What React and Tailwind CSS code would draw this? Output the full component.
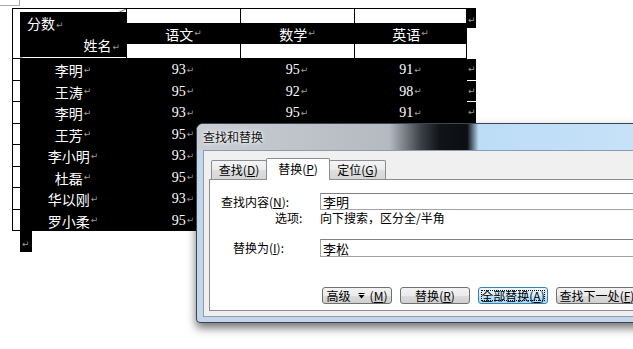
import React from "react";

function Pil({ className = "" }) {
  return (
    <span className={"font-['DejaVu_Sans',sans-serif] text-[9px] leading-none text-[#9a9a9a] ml-px " + className}>↵</span>
  );
}

function M({ k }) {
  return (
    <span>
      (<span className="underline">{k}</span>)
    </span>
  );
}

const rows = [
  ["李明", "93", "95", "91"],
  ["王涛", "95", "92", "98"],
  ["李明", "93", "95", "91"],
  ["王芳", "95", "", ""],
  ["李小明", "93", "", ""],
  ["杜磊", "95", "", ""],
  ["华以刚", "93", "", ""],
  ["罗小柔", "95", "", ""],
];

function Header() {
  return (
    <div className="flex">
      <div className="flex h-[51px] border border-black">
        <div className="w-[7px]" />
        <div className="relative w-[106px] pt-[3px] pb-[1px] flex">
          <svg className="absolute left-0 top-0" width="106" height="49">
            <line x1="106" y1="0" x2="0" y2="49" stroke="#7a7a7a" strokeWidth="1" />
          </svg>
          <div className="relative flex-1 bg-black text-white text-[14px] leading-none">
            <div className="pl-[7px] pt-[4px] flex items-end">
              分数<Pil />
            </div>
            <div className="pr-[6px] mt-[8px] flex justify-end items-end">
              姓名<Pil />
            </div>
          </div>
        </div>
        {["语文", "数学", "英语"].map((t, i) => (
          <div key={t} className={"border-l border-black flex flex-col " + (i === 2 ? "w-[112px]" : "w-[114px]")}>
            <div className="h-[14px]" />
            <div className="h-[21px] bg-black text-white flex items-center justify-center text-[14px] leading-none">
              {t}
              <Pil />
            </div>
          </div>
        ))}
      </div>
      <div className="w-[9px] h-[20px] bg-black flex items-end pb-[3px]">
        <Pil />
      </div>
    </div>
  );
}

function DataRow({ r, h, hidden }) {
  return (
    <div className={"flex " + h}>
      <div className="w-[8px] border-l border-b border-black" />
      <div className="w-[447px] bg-black flex text-white">
        <div className="w-[106px] flex items-center justify-center text-[14px] leading-none">
          {r[0]}
          <Pil />
        </div>
        {r.slice(1).map((n, i) => (
          <div
            key={i}
            className={"flex items-center justify-center font-['Liberation_Serif',serif] text-[14px] leading-none " + (i === 2 ? "w-[113px]" : "w-[114px]")}
          >
            {n}
            {n ? <Pil /> : null}
          </div>
        ))}
      </div>
      <div className="w-[9px] bg-black border-b border-white flex items-center">
        {hidden ? null : <Pil />}
      </div>
    </div>
  );
}

function Tab({ children, active, w }) {
  if (active) {
    return (
      <div className={"relative z-10 -ml-px h-[22px] -mb-px bg-white border border-b-0 border-[#898c95] rounded-t-[2px] flex items-center justify-center text-[12px] leading-none pb-[2px] " + w}>
        {children}
      </div>
    );
  }
  return (
    <div className={"h-[19px] border border-b-0 border-[#898c95] rounded-t-[2px] bg-[linear-gradient(#f4f4f4_0%,#ebebeb_50%,#dedede_50%,#d6d6d6_100%)] flex items-center justify-center text-[12px] leading-none " + w}>
      {children}
    </div>
  );
}

function Btn({ children, w = "w-[70px]", def }) {
  if (def) {
    return (
      <div className={"relative h-[17px] rounded-[3px] border border-[#3c7fb1] bg-[linear-gradient(#eaf6fd_0%,#d9f0fc_50%,#bee6fd_50%,#a7d9f5_100%)] flex items-center justify-center text-[12px] leading-none " + w}>
        <span className="absolute inset-[2px] border border-dotted border-black" />
        {children}
      </div>
    );
  }
  return (
    <div className={"h-[17px] rounded-[3px] border border-[#707070] bg-[linear-gradient(#f2f2f2_0%,#ebebeb_50%,#dddddd_50%,#cfcfcf_100%)] flex items-center justify-center text-[12px] leading-none whitespace-nowrap " + w}>
      {children}
    </div>
  );
}

function Dialog() {
  return (
    <div className="absolute left-[196px] top-[123px] w-[460px] h-[200px] rounded-t-[7px] rounded-b-[4px] border border-[#3a4452] bg-[#c3d6eb] shadow-[0_5px_10px_rgba(0,0,0,0.55)] flex flex-col overflow-hidden">
      <div className="h-[26px] shrink-0 bg-[linear-gradient(90deg,#c9ced4_0%,#b4bac1_42%,#3a3f46_49%,#101317_53%,#0c0f12_59%,#bcdcf7_61.5%,#c8e2f8_100%)] flex items-center pl-[6px] text-[12px] leading-none text-[#111] [text-shadow:0_0_5px_#fff,0_0_3px_#fff]">
        查找和替换
      </div>
      <div className="flex-1 pl-[6px] pb-[5px] flex">
        <div className="flex-1 border border-[#8e9cb0] bg-[#f0f0f0] pl-[5px] pt-[7px] pb-[5px] flex flex-col">
          <div className="flex items-end h-[21px] pl-[2px]">
            <Tab w="w-[56px]">
              查找<M k="D" />
            </Tab>
            <Tab active w="w-[64px]">
              替换<M k="P" />
            </Tab>
            <div className="-ml-px">
              <Tab w="w-[57px]">
                定位<M k="G" />
              </Tab>
            </div>
          </div>
          <div className="flex-1 bg-white border border-[#898c95] flex flex-col text-[12px] leading-none text-black">
            <div className="flex items-center mt-[13px] h-[17px]">
              <div className="w-[110px] pl-[11px]">
                查找内容<M k="N" />:
              </div>
              <div className="flex-1 h-[17px] border border-[#a0a4a9] border-t-[#7d8288] bg-white flex items-center pl-[2px] text-[13px]">
                李明
              </div>
            </div>
            <div className="flex items-center h-[16px]">
              <div className="w-[110px] pl-[65px]">选项:</div>
              <div>向下搜索，区分全/半角</div>
            </div>
            <div className="flex items-center mt-[13px] h-[18px]">
              <div className="w-[110px] pl-[23px]">
                替换为<M k="I" />:
              </div>
              <div className="flex-1 h-[18px] border border-[#a0a4a9] border-t-[#7d8288] bg-white flex items-center pl-[2px] text-[13px]">
                李松
              </div>
            </div>
            <div className="flex gap-[8px] mt-[30px] pl-[112px]">
              <Btn>
                高级
                <svg className="ml-[7px] mr-[5px]" width="7" height="7" viewBox="0 0 7 7">
                  <path d="M0.5 1.5h6" stroke="#000" strokeWidth="1" />
                  <path d="M0.5 3h6L3.5 6.5z" fill="#000" />
                </svg>
                <M k="M" />
              </Btn>
              <Btn>
                替换 <M k="R" />
              </Btn>
              <Btn def>
                全部替换<M k="A" />
              </Btn>
              <Btn w="w-[82px]">
                查找下一处<M k="F" />
              </Btn>
            </div>
          </div>
        </div>
      </div>
    </div>
  );
}

export default function App() {
  const hs = ["h-[22px]", "h-[21px]", "h-[22px]", "h-[21px]", "h-[22px]", "h-[21px]", "h-[22px]", "h-[21px]"];
  return (
    <div className="relative w-[633px] h-[349px] overflow-hidden bg-white font-['Noto_Sans_CJK_SC',sans-serif]">
      <svg className="absolute left-0 top-0" width="22" height="8">
        <path d="M19.5 0V5.5H0" stroke="#a8a8a8" fill="none" />
      </svg>
      <div className="pl-[12px] pt-[8px]">
        <Header />
        {rows.map((r, i) => (
          <DataRow key={i} r={r} h={hs[i]} hidden={i >= 3} />
        ))}
        <div className="ml-[8px] w-[12px] h-[21px] bg-black flex items-end pl-[1px] pb-[3px]">
          <Pil />
        </div>
      </div>
      <Dialog />
    </div>
  );
}
